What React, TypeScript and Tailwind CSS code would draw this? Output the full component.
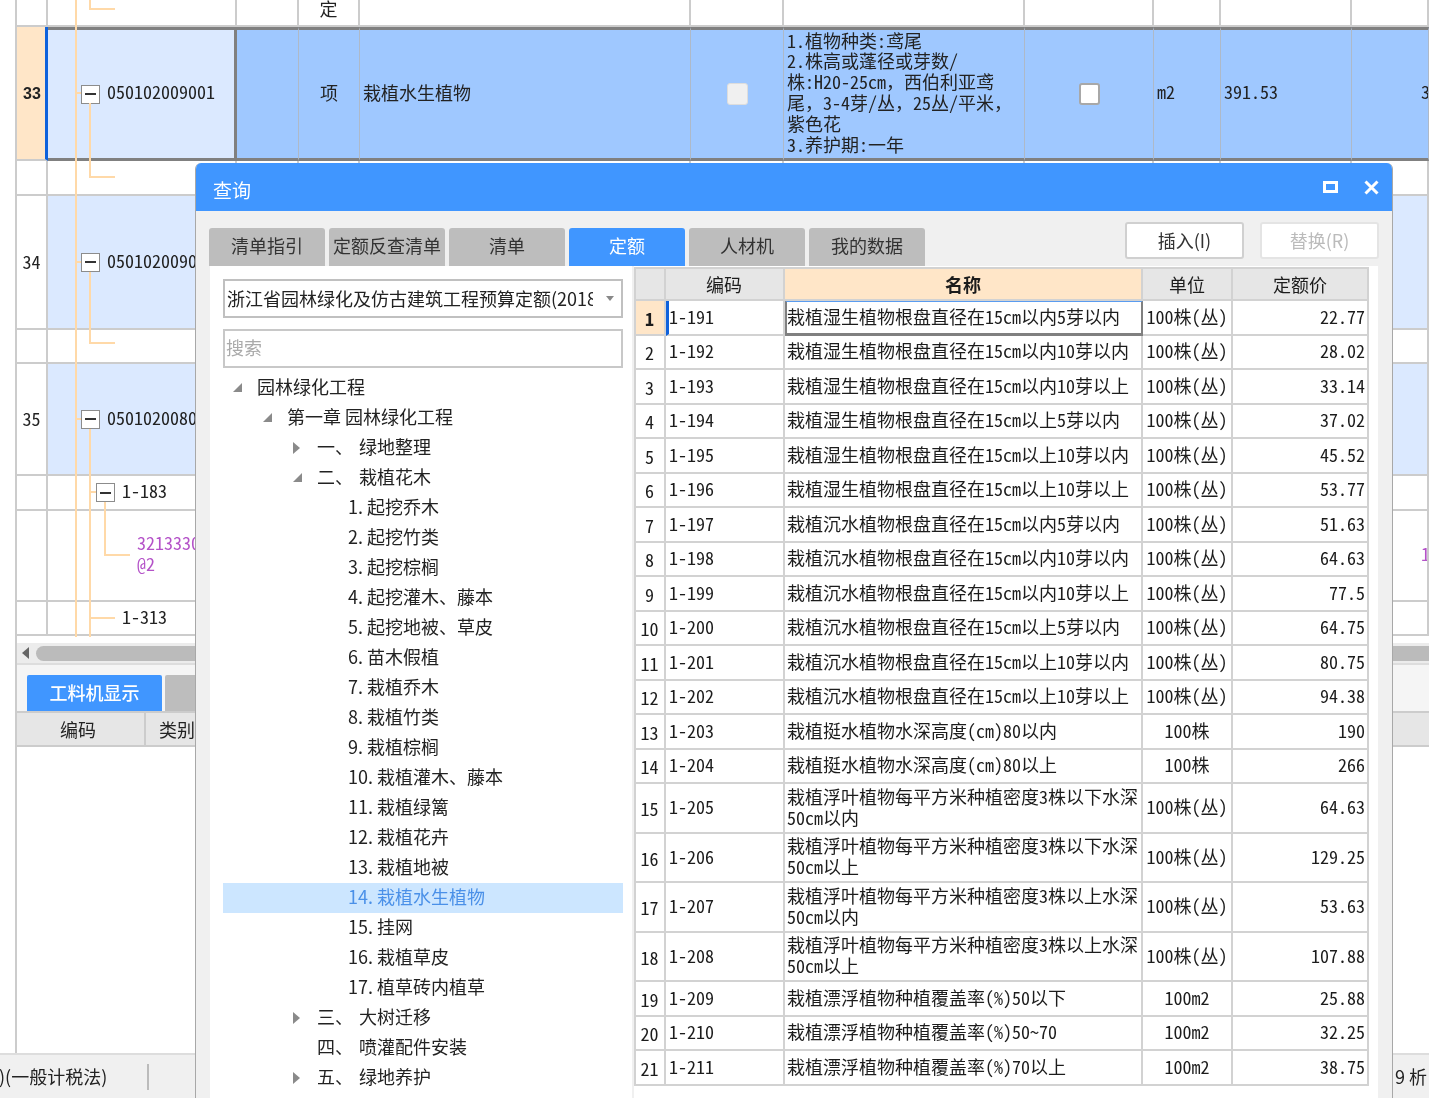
import React from "react";

function T({ s, up = "-mt-[2px]" }: { s: string; up?: string }) {
  return (
    <span className={`[font-feature-settings:'hwid'] ${up}`}>
      {s.split(/(，)/).map((p, i) =>
        p === "，" ? (
          <span key={i} className="[font-feature-settings:normal]">{p}</span>
        ) : (
          p
        )
      )}
    </span>
  );
}

const G = "grid grid-cols-[31px_189px_62px_61px_331px_93px_241px_129px_67px_131px_77px]";
const cell = "border-r-2 border-b-2 border-r-[#cccccc] border-b-[#cccccc] flex items-center overflow-hidden whitespace-nowrap";

function Blank({ n = 11, from = 0, tint = "" }: { n?: number; from?: number; tint?: string }) {
  return (
    <>
      {Array.from({ length: n }).map((_, i) => (
        <div key={i + from} className={`${cell} ${tint}`} />
      ))}
    </>
  );
}

function Box() {
  return (
    <span className="w-[19px] h-[19px] shrink-0 bg-white border border-[#8c8c8c] flex items-center justify-center">
      <span className="w-[11px] h-[2px] bg-[#333333]" />
    </span>
  );
}

function ParentRow({ no, code, h }: { no: string; code: string; h: string }) {
  return (
    <div className={`${G} ${h}`}>
      <div className={`${cell} justify-center`}><T s={no} /></div>
      <div className={`${cell} bg-[#dbe9ff] pl-[33px] gap-[7px]`}><Box /><T s={code} up="-mt-[4px]" /></div>
      <Blank n={9} from={2} tint="bg-[#dbe9ff]" />
    </div>
  );
}

const selCell = "border-r border-r-[#aeb9c8] border-y-[3px] border-y-[#808080] bg-[#9fc8ff] flex items-center overflow-hidden whitespace-nowrap";

function Row33() {
  const desc = [
    "1.植物种类:鸢尾",
    "2.株高或蓬径或芽数/",
    "株:H20-25cm，西伯利亚鸢",
    "尾，3-4芽/丛，25丛/平米，",
    "紫色花",
    "3.养护期:一年",
  ];
  return (
    <div className={`${G} h-[134px]`}>
      <div className="bg-[#ffe6c8] border-r-[3px] border-r-[#0f62dc] border-b-2 border-b-[#cccccc] flex items-center justify-center font-bold pl-[2px]">
        <span className="text-[16px] mt-[2px] font-['Liberation_Sans',sans-serif]">33</span>
      </div>
      <div className="bg-[#dbe9ff] border-y-[3px] border-y-[#808080] border-r-[3px] border-r-[#808080] flex items-center pl-[33px] gap-[7px] whitespace-nowrap">
        <Box /><T s="050102009001" up="-mt-[6px]" />
      </div>
      <div className={selCell} />
      <div className={`${selCell} justify-center`}><span className="-mt-[4px]">项</span></div>
      <div className={`${selCell} pl-[3px]`}><span className="-mt-[4px]">栽植水生植物</span></div>
      <div className={`${selCell} justify-center`}>
        <span className="w-[21px] h-[22px] rounded-[3px] bg-[#f0f0f0] border border-[#dddddd]" />
      </div>
      <div className={`${selCell} pl-[3px]`}>
        <div className="leading-[20.8px] -mt-[4px]">
          {desc.map((d) => (
            <div key={d}><T s={d} /></div>
          ))}
        </div>
      </div>
      <div className={`${selCell} justify-center`}>
        <span className="w-[21px] h-[22px] rounded-[3px] bg-white border-2 border-[#a8a8a8]" />
      </div>
      <div className={`${selCell} pl-[3px]`}><T s="m2" up="-mt-[6px]" /></div>
      <div className={`${selCell} pl-[3px]`}><T s="391.53" up="-mt-[6px]" /></div>
      <div className={`${selCell} pl-[69px]`}><T s="3" up="-mt-[6px]" /></div>
    </div>
  );
}

function Grid() {
  return (
    <div className="flex flex-col w-[1414px] border-l-2 border-l-[#cccccc] h-full">
      <div className={`${G} h-[27px]`}>
        <div className={cell} />
        <div className={cell} />
        <div className={cell} />
        <div className={`${cell} justify-center items-start`}><span className="-mt-[5px]">定</span></div>
        <Blank n={7} from={4} />
      </div>
      <Row33 />
      <div className={`${G} h-[35px]`}><Blank /></div>
      <ParentRow no="34" code="050102009002" h="h-[134px]" />
      <div className={`${G} h-[34px]`}><Blank /></div>
      <ParentRow no="35" code="050102008001" h="h-[112px]" />
      <div className={`${G} h-[35px]`}>
        <div className={cell} />
        <div className={`${cell} pl-[48px] gap-[7px]`}><Box /><T s="1-183" up="-mt-[4px]" /></div>
        <Blank n={9} from={2} />
      </div>
      <div className={`${G} h-[91px]`}>
        <div className={cell} />
        <div className={`${cell} pl-[89px] text-[#b452c8]`}>
          <div className="leading-[21px] -mt-[6px]"><T s="3213330" /><br /><T s="@2" /></div>
        </div>
        <Blank n={8} from={2} />
        <div className={`${cell} pl-[69px] text-[#b452c8]`}><T s="1" up="-mt-[4px]" /></div>
      </div>
      <div className={`${G} h-[34px]`}>
        <div className={cell} />
        <div className={`${cell} pl-[74px]`}><T s="1-313" up="-mt-[4px]" /></div>
        <Blank n={9} from={2} />
      </div>
      <div className="h-[7px] shrink-0" />
      <div className="h-[22px] shrink-0 bg-[#ececec] flex items-center pl-[5px] gap-[7px] border-b-2 border-b-[#dddddd]">
        <span className="w-0 h-0 border-y-[6px] border-y-transparent border-r-[7px] border-r-[#666666]" />
        <span className="w-[1400px] h-[15px] rounded-l-[8px] bg-[#bbbbbb]" />
      </div>
      <div className="h-[48px] shrink-0 bg-[#f5f5f5] flex items-end pl-[10px] gap-[3px] border-b-2 border-b-[#cccccc]">
        <div className="w-[135px] h-[36px] rounded-t-[2px] bg-[#4096ff] text-white font-medium flex items-center justify-center pb-[2px]">工料机显示</div>
        <div className="w-[116px] h-[36px] rounded-t-[2px] bg-[#bdbdbd] text-[#333333] flex items-center justify-center">单</div>
      </div>
      <div className="h-[34px] shrink-0 flex bg-[#e6e6e6] border-b-2 border-b-[#cccccc]">
        <div className="w-[129px] border-r-2 border-r-[#cccccc] flex items-center justify-center pr-[5px]">编码</div>
        <div className="w-[116px] pl-[13px] flex items-center">类别</div>
      </div>
      <div className="flex-1 bg-white" />
    </div>
  );
}

function TreeLines() {
  const c = "#ffd9a8";
  return (
    <svg className="absolute left-0 top-0" width="200" height="640" fill="none" stroke={c} strokeWidth="2">
      <path d="M76 0V637M76 93H81M76 262H81M76 419H81" />
      <path d="M90 0V9H115M90 103V177H115M90 272V343H115M90 429V637M90 492H96M90 618H115M105 502V555H130" />
    </svg>
  );
}

type TreeItem = [number, "e" | "c" | null, string, string?, boolean?];
const tree: TreeItem[] = [
  [0, "e", "园林绿化工程"],
  [1, "e", "第一章 园林绿化工程"],
  [2, "c", "一、", "绿地整理"],
  [2, "e", "二、", "栽植花木"],
  [3, null, "1. 起挖乔木"],
  [3, null, "2. 起挖竹类"],
  [3, null, "3. 起挖棕榈"],
  [3, null, "4. 起挖灌木、藤本"],
  [3, null, "5. 起挖地被、草皮"],
  [3, null, "6. 苗木假植"],
  [3, null, "7. 栽植乔木"],
  [3, null, "8. 栽植竹类"],
  [3, null, "9. 栽植棕榈"],
  [3, null, "10. 栽植灌木、藤本"],
  [3, null, "11. 栽植绿篱"],
  [3, null, "12. 栽植花卉"],
  [3, null, "13. 栽植地被"],
  [3, null, "14. 栽植水生植物", undefined, true],
  [3, null, "15. 挂网"],
  [3, null, "16. 栽植草皮"],
  [3, null, "17. 植草砖内植草"],
  [2, "c", "三、", "大树迁移"],
  [2, null, "四、", "喷灌配件安装"],
  [2, "c", "五、", "绿地养护"],
];
const pads = ["pl-[10px]", "pl-[40px]", "pl-[70px]", "pl-[125px]"];

function Arrow({ kind }: { kind: "e" | "c" | null }) {
  return (
    <span className="w-[24px] shrink-0 flex items-center">
      {kind === "e" && (
        <svg width="10" height="10"><polygon points="9,0 9,9 0,9" fill="#8a8a8a" /></svg>
      )}
      {kind === "c" && (
        <svg width="8" height="12"><polygon points="0,0 7,6 0,12" fill="#8a8a8a" /></svg>
      )}
    </span>
  );
}

function LeftPanel() {
  return (
    <div className="w-[422px] shrink-0 bg-white pl-[13px] pr-[9px] pt-[13px]">
      <div className="h-[39px] border-2 border-[#c0c0c0] flex items-center pl-[2px] relative">
        <span className="w-[366px] overflow-hidden whitespace-nowrap text-[#222222]">浙江省园林绿化及仿古建筑工程预算定额(2018定额)</span>
        <span className="ml-[13px] w-0 h-0 border-x-[4px] border-x-transparent border-t-[5px] border-t-[#888888]" />
      </div>
      <div className="h-[39px] mt-[11px] border-2 border-[#c8c8c8] flex items-center pl-[1px] pb-[3px] text-[#aaaaaa]">搜索</div>
      <div className="mt-[5px]">
        {tree.map(([lvl, arrow, label, rest, sel]) => (
          <div
            key={label}
            className={`h-[30px] flex items-center whitespace-pre ${pads[lvl]} ${sel ? "bg-[#cce6ff] text-[#4a90e8]" : "text-[#222222]"}`}
          >
            {lvl < 3 && <Arrow kind={arrow} />}
            <span className="-mt-[4px]">{label}</span>
            {rest && <span className="-mt-[4px] ml-[6px]">{rest}</span>}
          </div>
        ))}
      </div>
    </div>
  );
}

type R = [string, string, string, string];
const U = "100株(丛)";
const rows: R[] = [
  ["1-191", "栽植湿生植物根盘直径在15cm以内5芽以内", U, "22.77"],
  ["1-192", "栽植湿生植物根盘直径在15cm以内10芽以内", U, "28.02"],
  ["1-193", "栽植湿生植物根盘直径在15cm以内10芽以上", U, "33.14"],
  ["1-194", "栽植湿生植物根盘直径在15cm以上5芽以内", U, "37.02"],
  ["1-195", "栽植湿生植物根盘直径在15cm以上10芽以内", U, "45.52"],
  ["1-196", "栽植湿生植物根盘直径在15cm以上10芽以上", U, "53.77"],
  ["1-197", "栽植沉水植物根盘直径在15cm以内5芽以内", U, "51.63"],
  ["1-198", "栽植沉水植物根盘直径在15cm以内10芽以内", U, "64.63"],
  ["1-199", "栽植沉水植物根盘直径在15cm以内10芽以上", U, "77.5"],
  ["1-200", "栽植沉水植物根盘直径在15cm以上5芽以内", U, "64.75"],
  ["1-201", "栽植沉水植物根盘直径在15cm以上10芽以内", U, "80.75"],
  ["1-202", "栽植沉水植物根盘直径在15cm以上10芽以上", U, "94.38"],
  ["1-203", "栽植挺水植物水深高度(cm)80以内", "100株", "190"],
  ["1-204", "栽植挺水植物水深高度(cm)80以上", "100株", "266"],
  ["1-205", "栽植浮叶植物每平方米种植密度3株以下水深|50cm以内", U, "64.63"],
  ["1-206", "栽植浮叶植物每平方米种植密度3株以下水深|50cm以上", U, "129.25"],
  ["1-207", "栽植浮叶植物每平方米种植密度3株以上水深|50cm以内", U, "53.63"],
  ["1-208", "栽植浮叶植物每平方米种植密度3株以上水深|50cm以上", U, "107.88"],
  ["1-209", "栽植漂浮植物种植覆盖率(%)50以下", "100m2", "25.88"],
  ["1-210", "栽植漂浮植物种植覆盖率(%)50~70", "100m2", "32.25"],
  ["1-211", "栽植漂浮植物种植覆盖率(%)70以上", "100m2", "38.75"],
];

const TG = "grid grid-cols-[30px_119px_358px_90px_136px]";
const tc = "border-r-2 border-b-2 border-r-[#d2d2d2] border-b-[#d2d2d2] flex items-center whitespace-nowrap overflow-hidden";

function RightPanel() {
  return (
    <div className="flex-1 bg-white pt-[1px]">
      <div className="w-[735px] border-l-2 border-t-2 border-l-[#d2d2d2] border-t-[#d2d2d2] text-[#1c1c1c]">
        <div className={`${TG} h-[32px]`}>
          <div className={`${tc} bg-[#e6e6e6]`} />
          <div className={`${tc} bg-[#e6e6e6] justify-center pr-[1px]`}>编码</div>
          <div className={`${tc} bg-[#ffe6c8] justify-center font-bold`}>名称</div>
          <div className={`${tc} bg-[#e6e6e6] justify-center`}>单位</div>
          <div className={`${tc} bg-[#e6e6e6] justify-center`}>定额价</div>
        </div>
        {rows.map(([code, name, unit, price], i) => {
          const two = name.includes("|");
          const first = i === 0;
          return (
            <div key={code} className={`${TG} ${two ? "h-[49.5px]" : "h-[34.5px]"}`}>
              <div className={`${tc} justify-center pt-[4px] pr-[1px] ${first ? "bg-[#ffe6c8] font-bold" : ""}`}>
                <T s={String(i + 1)} />
              </div>
              {first ? (
                <div className="border-l-[3px] border-l-[#0f62dc] border-r-2 border-b-2 border-r-[#d2d2d2] border-b-[#d2d2d2] flex items-center whitespace-nowrap"><T s={code} /></div>
              ) : (
                <div className={`${tc} pl-[3px]`}><T s={code} /></div>
              )}
              {first ? (
                <div className="border-t border-t-[#5a9cf0] border-x-2 border-b-[3px] border-x-[#808080] border-b-[#808080] flex items-center whitespace-nowrap"><T s={name} /></div>
              ) : (
                <div className={`${tc} pl-[2px]`}>
                  <div className="leading-[21px] -mt-[2px]">
                    {name.split("|").map((n) => (
                      <div key={n}><T s={n} /></div>
                    ))}
                  </div>
                </div>
              )}
              <div className={`${tc} justify-center`}><T s={unit} /></div>
              <div className={`${tc} justify-end pr-[2px]`}><T s={price} /></div>
            </div>
          );
        })}
      </div>
    </div>
  );
}

function Dialog() {
  const tabs = ["清单指引", "定额反查清单", "清单", "定额", "人材机", "我的数据"];
  return (
    <div className="absolute left-[195px] top-[163px] bottom-0 w-[1198px] rounded-t-[6px] overflow-hidden bg-[#f0f0f0] border-x border-x-[#a8a8a8] flex flex-col">
      <div className="h-[48px] shrink-0 bg-[#4096ff] flex items-center pl-[17px] text-white text-[19px]">
        <span className="mt-[6px]">查询</span>
        <span className="ml-auto w-[15px] h-[12px] border-[3px] border-white" />
        <svg className="ml-[26px] mr-[13px]" width="15" height="15" viewBox="0 0 15 15" stroke="white" strokeWidth="3">
          <path d="M1.5 1.5L13.5 13.5M13.5 1.5L1.5 13.5" />
        </svg>
      </div>
      <div className="h-[55px] shrink-0 flex items-end pl-[13px] pr-[13px]">
        <div className="flex gap-[4px]">
          {tabs.map((t) => (
            <div
              key={t}
              className={`w-[116px] h-[38px] rounded-t-[3px] flex items-center justify-center whitespace-nowrap pb-[3px] ${t === "定额" ? "bg-[#4096ff] text-white" : "bg-[#bdbdbd] text-[#333333]"}`}
            >
              {t}
            </div>
          ))}
        </div>
        <div className="ml-auto self-start mt-[11px] flex gap-[16px]">
          <div className="w-[119px] h-[37px] bg-white border-2 border-[#d0d0d0] rounded-[3px] flex items-center justify-center text-[#333333]">插入(I)</div>
          <div className="w-[119px] h-[37px] bg-white border-2 border-[#e4e4e4] rounded-[3px] flex items-center justify-center text-[#bbbbbb]">替换(R)</div>
        </div>
      </div>
      <div className="flex-1 flex gap-[2px] ml-[14px] mr-[14px] min-h-0">
        <LeftPanel />
        <RightPanel />
      </div>
    </div>
  );
}

export default function App() {
  return (
    <div className="relative w-[1429px] h-[1098px] overflow-hidden bg-white text-[18px] text-[#222222] font-['Noto_Sans_CJK_SC',sans-serif] blur-[0.4px]">
      <div className="flex flex-col h-full">
        <div className="flex flex-1 min-h-0 pl-[15px]">
          <Grid />
        </div>
        <div className="h-[45px] shrink-0 bg-[#f0f0f0] border-t-2 border-t-[#dddddd] flex items-center">
          <span className="-ml-[1px] whitespace-nowrap">)(一般计税法)</span>
          <span className="ml-[40px] w-[2px] h-[26px] bg-[#bbbbbb]" />
          <span className="ml-auto mr-[-6px] w-[40px] whitespace-nowrap overflow-hidden">9 析</span>
        </div>
      </div>
      <TreeLines />
      <Dialog />
    </div>
  );
}
